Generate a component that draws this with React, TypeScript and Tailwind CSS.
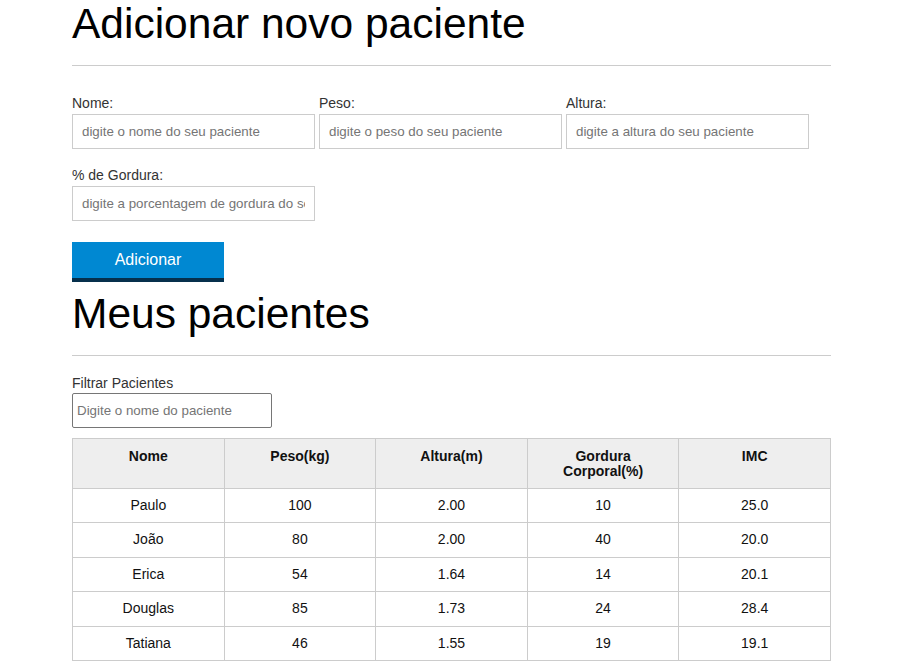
import { useState } from 'react';

interface Paciente {
  nome: string;
  peso: number;
  altura: number;
  gordura: number;
}

const pacientesIniciais: Paciente[] = [
  { nome: 'Paulo', peso: 100, altura: 2.0, gordura: 10 },
  { nome: 'João', peso: 80, altura: 2.0, gordura: 40 },
  { nome: 'Erica', peso: 54, altura: 1.64, gordura: 14 },
  { nome: 'Douglas', peso: 85, altura: 1.73, gordura: 24 },
  { nome: 'Tatiana', peso: 46, altura: 1.55, gordura: 19 },
];

const calculaImc = (peso: number, altura: number) => (peso / (altura * altura)).toFixed(1);

function Campo({ label, placeholder }: { label: string; placeholder: string }) {
  return (
    <div className="w-[243px]">
      <label className="block text-[14px] leading-[16px] text-[#333] mb-[3px]">{label}</label>
      <input
        type="text"
        placeholder={placeholder}
        className="block w-full h-[35px] border border-[#ccc] px-[9px] text-[13.33px] outline-none placeholder:text-[#757575]"
      />
    </div>
  );
}

export default function App() {
  const [pacientes] = useState<Paciente[]>(pacientesIniciais);
  const [filtro, setFiltro] = useState('');

  const visiveis = pacientes.filter((p) => p.nome.toLowerCase().includes(filtro.toLowerCase()));

  return (
    <div className="bg-white min-h-[668px] font-['Liberation_Sans',Arial,sans-serif] text-black">
      <main className="ml-[72px] w-[759px]">
        <h1 className="text-[42.5px] leading-[48px] font-normal">Adicionar novo paciente</h1>
        <hr className="mt-[17px] border-0 border-t border-[#ccc]" />

        {/* ── Formulário ── */}
        <form className="mt-[29px]" onSubmit={(e) => e.preventDefault()}>
          <div className="flex flex-wrap gap-x-[4px] gap-y-[18px]">
            <Campo label="Nome:" placeholder="digite o nome do seu paciente" />
            <Campo label="Peso:" placeholder="digite o peso do seu paciente" />
            <Campo label="Altura:" placeholder="digite a altura do seu paciente" />
            <Campo label="% de Gordura:" placeholder="digite a porcentagem de gordura do seu paciente" />
          </div>
          <button
            type="submit"
            className="mt-[21px] block w-[152px] h-[40px] bg-[#0088d2] border-b-[4px] border-[#06304c] text-white text-[16px] leading-[18px]"
          >
            Adicionar
          </button>
        </form>

        <h2 className="mt-[8px] text-[42.5px] leading-[48px] font-normal">Meus pacientes</h2>
        <hr className="mt-[17px] border-0 border-t border-[#ccc]" />

        {/* ── Filtro ── */}
        <div className="mt-[19px]">
          <label className="block text-[14px] leading-[16px] text-[#333] mb-[2px]">Filtrar Pacientes</label>
          <input
            type="text"
            value={filtro}
            onChange={(e) => setFiltro(e.target.value)}
            placeholder="Digite o nome do paciente"
            className="block w-[200px] h-[35px] border border-[#767676] rounded-[2px] px-[4px] text-[13.33px] outline-none placeholder:text-[#757575]"
          />
        </div>

        <table className="mt-[10px] w-full table-fixed border-collapse text-[14px] text-[#111]">
          <thead>
            <tr className="bg-[#eee]">
              {['Nome', 'Peso(kg)', 'Altura(m)', 'Gordura Corporal(%)', 'IMC'].map((h) => (
                <th
                  key={h}
                  className="border border-[#ccc] align-top pt-[10px] pb-[9px] px-[10px] h-[50px] leading-[15px] font-bold text-center"
                >
                  {h}
                </th>
              ))}
            </tr>
          </thead>
          <tbody>
            {visiveis.map((p) => (
              <tr key={p.nome}>
                <td className="border border-[#ccc] py-[8px] leading-[17.4px] text-center">{p.nome}</td>
                <td className="border border-[#ccc] py-[8px] leading-[17.4px] text-center">{p.peso}</td>
                <td className="border border-[#ccc] py-[8px] leading-[17.4px] text-center">{p.altura.toFixed(2)}</td>
                <td className="border border-[#ccc] py-[8px] leading-[17.4px] text-center">{p.gordura}</td>
                <td className="border border-[#ccc] py-[8px] leading-[17.4px] text-center">{calculaImc(p.peso, p.altura)}</td>
              </tr>
            ))}
          </tbody>
        </table>
      </main>
    </div>
  );
}
